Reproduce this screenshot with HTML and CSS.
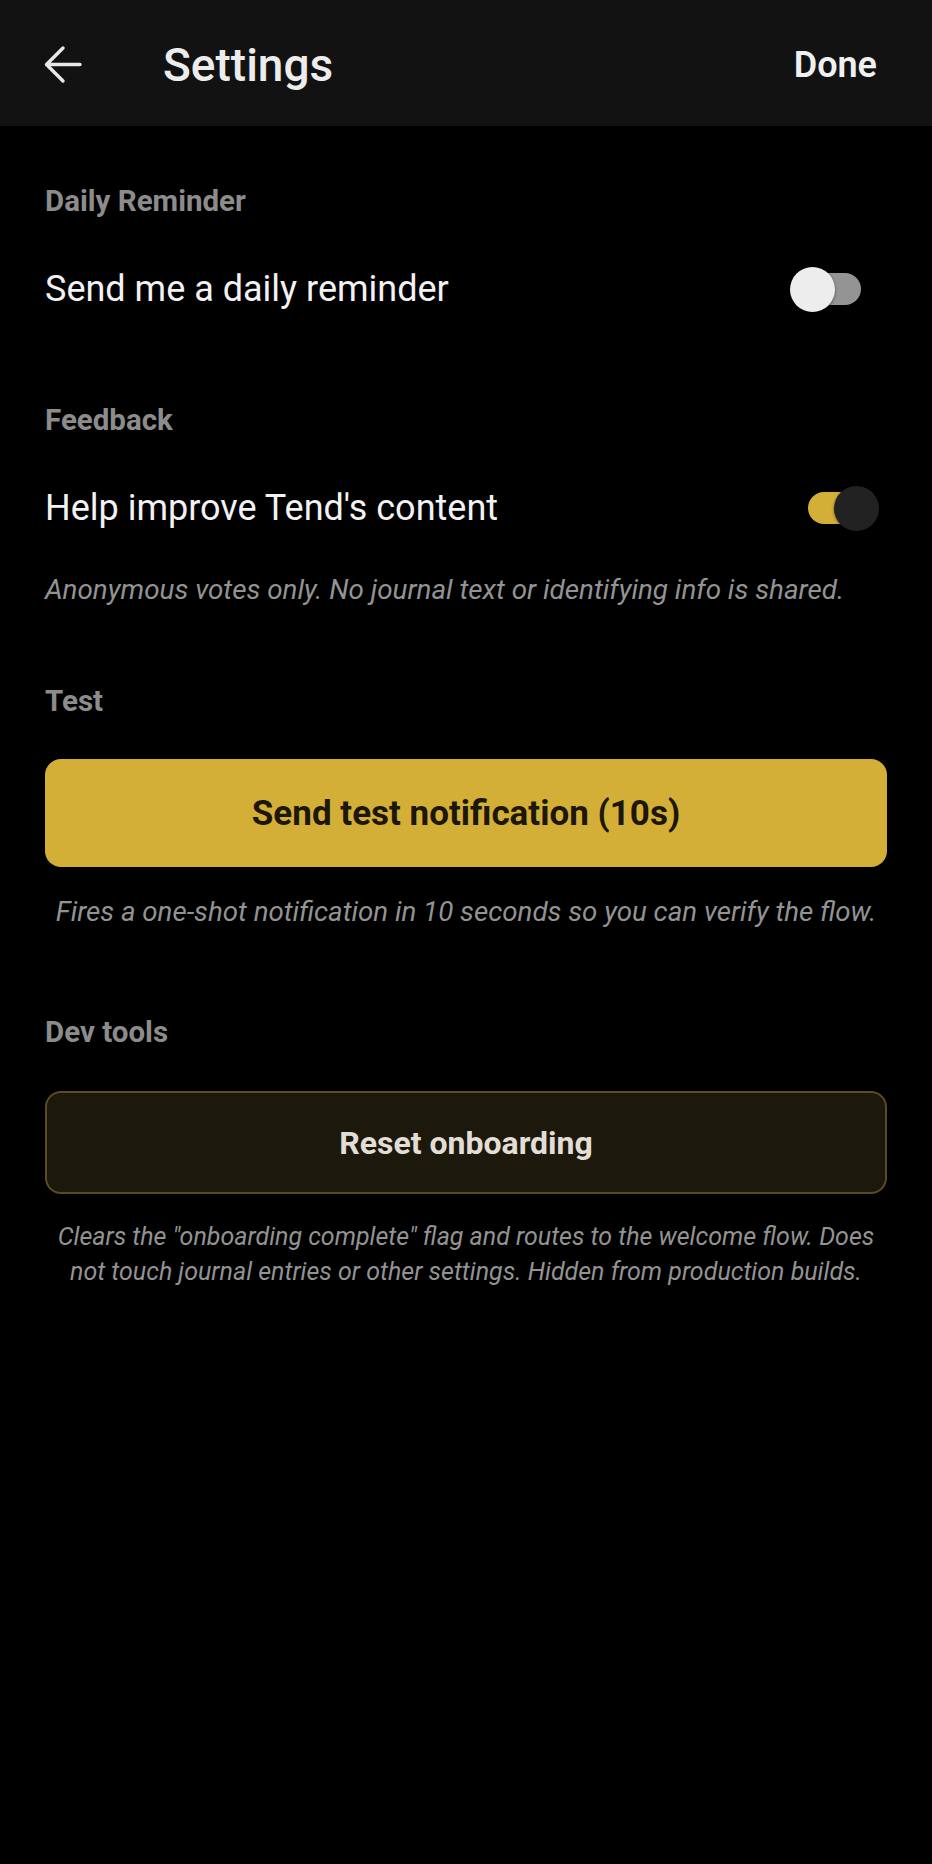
FILE: index.html
```html
<!DOCTYPE html>
<html>
<head>
    <title>Settings - Tend</title>
    <link rel="stylesheet" href="styles.css">
</head>
<body>
    <header class="topbar">
        <button class="back" aria-label="Back">
            <svg width="40" height="40" viewBox="0 0 40 40">
                <path d="M36 19.5H3M19 3L2.5 19.5L19 36" fill="none" stroke="#e8e8e8" stroke-width="3.4" stroke-linecap="round" stroke-linejoin="round"/>
            </svg>
        </button>
        <h1 class="title">Settings</h1>
        <button class="done">Done</button>
    </header>

    <main class="content">
        <section class="group group-reminder">
            <h2 class="group-label">Daily Reminder</h2>
            <div class="row">
                <span class="row-text">Send me a daily reminder</span>
                <div class="switch">
                    <span class="track"></span>
                    <span class="thumb"></span>
                </div>
            </div>
        </section>

        <section class="group group-feedback">
            <h2 class="group-label">Feedback</h2>
            <div class="row">
                <span class="row-text">Help improve Tend's content</span>
                <div class="switch on">
                    <span class="track"></span>
                    <span class="thumb"></span>
                </div>
            </div>
            <p class="caption caption-left">Anonymous votes only. No journal text or identifying info is shared.</p>
        </section>

        <section class="group group-test">
            <h2 class="group-label">Test</h2>
            <button class="btn btn-primary">Send test notification (10s)</button>
            <p class="caption caption-center caption-fires">Fires a one-shot notification in 10 seconds so you can verify the flow.</p>
        </section>

        <section class="group group-dev">
            <h2 class="group-label">Dev tools</h2>
            <button class="btn btn-outline">Reset onboarding</button>
            <p class="caption caption-center caption-small">Clears the "onboarding complete" flag and routes to the welcome flow. Does not touch journal entries or other settings. Hidden from production builds.</p>
        </section>
    </main>
</body>
</html>
```

FILE: styles.css
```css
* {
    box-sizing: border-box;
}
body {
    margin: 0;
    background: #000;
    font-family: Roboto, "Noto Sans", Arial, sans-serif;
    color: #f2f2f2;
    min-height: 1864px;
}
button {
    font-family: inherit;
    cursor: pointer;
}

/* top bar */
.topbar {
    display: flex;
    align-items: center;
    height: 126px;
    padding-top: 3px;
    background: #121212;
}
.back {
    display: flex;
    margin-left: 44px;
    padding: 0;
    border: none;
    background: none;
}
.title {
    margin: 0 0 0 79px;
    font-size: 46px;
    font-weight: 500;
    color: #ececec;
}
.done {
    margin-left: auto;
    margin-right: 55px;
    padding: 0;
    border: none;
    background: none;
    font-size: 36px;
    font-weight: 600;
    color: #f0f0f0;
}

/* content */
.content {
    padding: 0 45px;
}
.group-reminder { margin-top: 57px; }
.group-feedback { margin-top: 81px; }
.group-test { margin-top: 75px; }
.group-dev { margin-top: 84px; }

.group-label {
    margin: 0;
    font-size: 29.5px;
    line-height: 36px;
    font-weight: 700;
    color: #8c8c8c;
}
.row {
    display: flex;
    align-items: center;
    justify-content: space-between;
    height: 64px;
    margin-top: 38px;
}
.row-text {
    font-size: 36px;
    color: #f2f2f2;
}

/* switch */
.switch {
    position: relative;
    display: flex;
    align-items: center;
    justify-content: center;
    width: 89px;
    height: 45px;
    margin-right: 8px;
}
.track {
    width: 53px;
    height: 32px;
    border-radius: 16px;
    background: #949494;
}
.thumb {
    position: absolute;
    top: 0;
    left: 0;
    width: 45px;
    height: 45px;
    border-radius: 50%;
    background: #ededed;
    box-shadow: 0 1px 3px rgba(0,0,0,0.5);
}
.switch.on .track {
    background: #d4af37;
}
.switch.on .thumb {
    left: 44px;
    background: #222;
}

/* captions */
.caption {
    margin: 0;
    font-style: italic;
    color: #939393;
}
.caption-left {
    margin-top: 32px;
    font-size: 27.8px;
    line-height: 36px;
}
.caption-center {
    text-align: center;
}
.caption-fires {
    margin-top: 27px;
    font-size: 27.7px;
    line-height: 36px;
}
.caption-small {
    margin-top: 25px;
    padding: 0 4px;
    font-size: 25px;
    line-height: 35px;
}

/* buttons */
.btn {
    display: block;
    width: 100%;
    border-radius: 16px;
    font-weight: 700;
}
.btn-primary {
    height: 108px;
    margin-top: 40px;
    border: none;
    background: #d4af37;
    color: #1c1708;
    font-size: 35px;
}
.btn-outline {
    height: 103px;
    margin-top: 41px;
    border: 2px solid #5a4b25;
    background: #1d180c;
    color: #e2ded6;
    font-size: 32px;
}
```
